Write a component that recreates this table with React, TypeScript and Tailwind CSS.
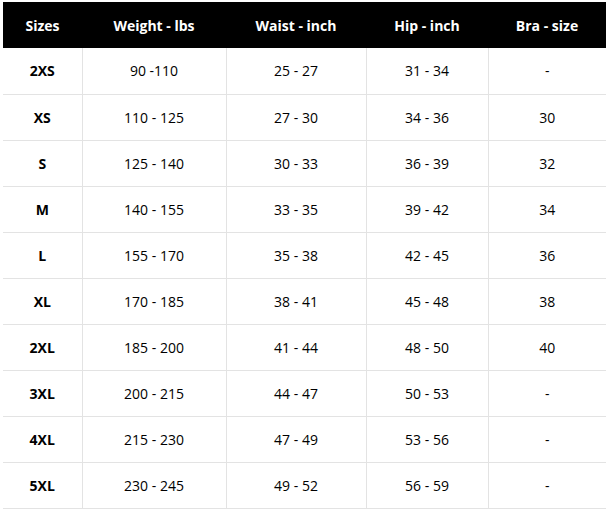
const rows = [
  ["2XS", "90 -110", "25 - 27", "31 - 34", "-"],
  ["XS", "110 - 125", "27 - 30", "34 - 36", "30"],
  ["S", "125 - 140", "30 - 33", "36 - 39", "32"],
  ["M", "140 - 155", "33 - 35", "39 - 42", "34"],
  ["L", "155 - 170", "35 - 38", "42 - 45", "36"],
  ["XL", "170 - 185", "38 - 41", "45 - 48", "38"],
  ["2XL", "185 - 200", "41 - 44", "48 - 50", "40"],
  ["3XL", "200 - 215", "44 - 47", "50 - 53", "-"],
  ["4XL", "215 - 230", "47 - 49", "53 - 56", "-"],
  ["5XL", "230 - 245", "49 - 52", "56 - 59", "-"],
];

const headers = ["Sizes", "Weight - lbs", "Waist - inch", "Hip - inch", "Bra - size"];

export default function App() {
  return (
    <div className="bg-white pl-[3px] pt-[2px] font-['Open_Sans',sans-serif] text-[14px] text-black">
      <table className="w-[603px] table-fixed border-collapse">
        <colgroup>
          <col className="w-[79px]" />
          <col className="w-[144px]" />
          <col className="w-[140px]" />
          <col className="w-[122px]" />
          <col className="w-[118px]" />
        </colgroup>
        <thead>
          <tr className="h-[46px] bg-black text-white">
            {headers.map((h) => (
              <th key={h} className="text-center font-bold">
                {h}
              </th>
            ))}
          </tr>
        </thead>
        <tbody>
          {rows.map((r) => (
            <tr key={r[0]} className="h-[46px]">
              {r.map((c, i) => (
                <td
                  key={i}
                  className={
                    "border-b border-[#e3e3e3] text-center " +
                    (i === 0 ? "font-bold" : "border-l")
                  }
                >
                  {c}
                </td>
              ))}
            </tr>
          ))}
        </tbody>
      </table>
    </div>
  );
}
